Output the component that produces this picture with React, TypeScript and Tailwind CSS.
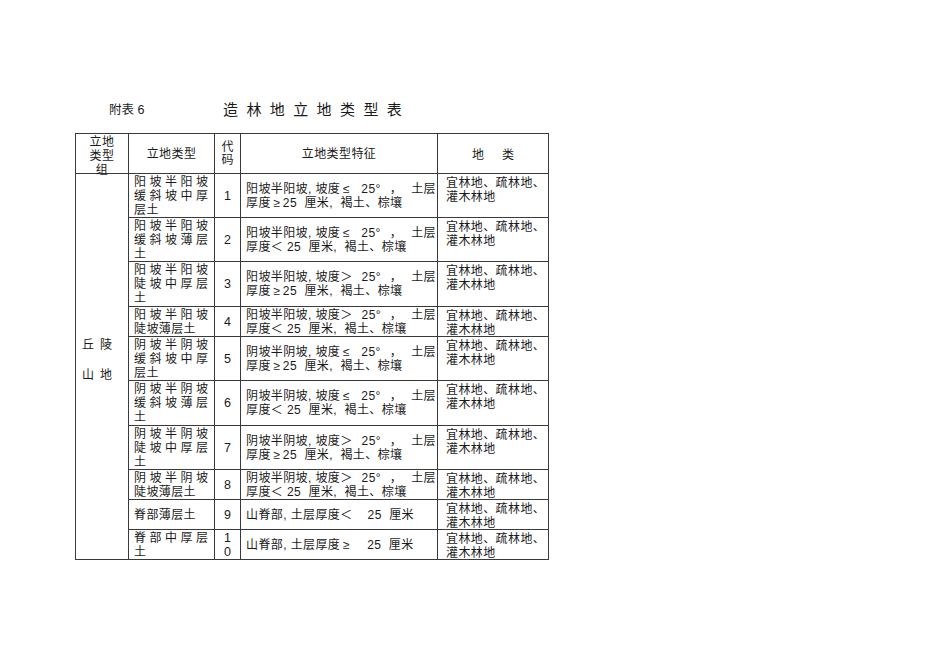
import React from "react";

const FONT = {
  fontFamily: '"Liberation Sans", "Noto Sans CJK SC", sans-serif',
};

type Row = {
  type: string[];
  code: string[];
  feat: string[][]; // each line: if more than one segment, justified
  land: string[];
};

const A = "宜林地、疏林地、";
const B = "灌木林地";

const L2a = "厚度≥25  厘米,  褐土、棕壤";
const L2b = "厚度＜ 25  厘米,  褐土、棕壤";

const rows: Row[] = [
  {
    type: ["阳坡半阳坡", "缓斜坡中厚", "层土"],
    code: ["1"],
    feat: [["阳坡半阳坡, 坡度≤", "25°", "，", "土层"], [L2a]],
    land: [A, B],
  },
  {
    type: ["阳坡半阳坡", "缓斜坡薄层", "土"],
    code: ["2"],
    feat: [["阳坡半阳坡, 坡度≤", "25°", "，", "土层"], [L2b]],
    land: [A, B],
  },
  {
    type: ["阳坡半阳坡", "陡坡中厚层", "土"],
    code: ["3"],
    feat: [["阳坡半阳坡, 坡度＞", "25°", "，", "土层"], [L2a]],
    land: [A, B],
  },
  {
    type: ["阳坡半阳坡", "陡坡薄层土"],
    code: ["4"],
    feat: [["阳坡半阳坡, 坡度＞", "25°", "，", "土层"], [L2b]],
    land: [A, B],
  },
  {
    type: ["阴坡半阴坡", "缓斜坡中厚", "层土"],
    code: ["5"],
    feat: [["阴坡半阴坡, 坡度≤", "25°", "，", "土层"], [L2a]],
    land: [A, B],
  },
  {
    type: ["阴坡半阴坡", "缓斜坡薄层", "土"],
    code: ["6"],
    feat: [["阴坡半阴坡, 坡度≤", "25°", "，", "土层"], [L2b]],
    land: [A, B],
  },
  {
    type: ["阴坡半阴坡", "陡坡中厚层", "土"],
    code: ["7"],
    feat: [["阴坡半阴坡, 坡度＞", "25°", "，", "土层"], [L2a]],
    land: [A, B],
  },
  {
    type: ["阴坡半阴坡", "陡坡薄层土"],
    code: ["8"],
    feat: [["阴坡半阴坡, 坡度＞", "25°", "，", "土层"], [L2b]],
    land: [A, B],
  },
  {
    type: ["脊部薄层土"],
    code: ["9"],
    feat: [["山脊部, 土层厚度＜    25  厘米"]],
    land: [A, B],
  },
  {
    type: ["脊部中厚层", "土"],
    code: ["1", "0"],
    feat: [["山脊部, 土层厚度≥    25  厘米"]],
    land: [A, B],
  },
];

function T({ s }: { s: string }) {
  const parts = s.split(/([≤≥])/);
  return (
    <>
      {parts.map((p, i) =>
        p === "≤" || p === "≥" ? (
          <span key={i} className="inline-block w-[12px] text-center tracking-normal">
            {p}
          </span>
        ) : (
          <React.Fragment key={i}>{p}</React.Fragment>
        )
      )}
    </>
  );
}

function TypeCell({ lines }: { lines: string[] }) {
  return (
    <div className="border-r border-b border-[#3a3a3a] overflow-hidden flex flex-col justify-center pl-[5px] pr-[6px]">
      {lines.map((l, i) =>
        i < lines.length - 1 ? (
          <div key={i} className="flex justify-between h-[14px] leading-[14px]">
            {l.split("").map((c, j) => (
              <span key={j}>{c}</span>
            ))}
          </div>
        ) : (
          <div key={i} className="h-[14px] leading-[14px] whitespace-nowrap tracking-[0.4px]">
            {l}
          </div>
        )
      )}
    </div>
  );
}

function FeatCell({ lines }: { lines: string[][] }) {
  return (
    <div className="border-r border-b border-[#3a3a3a] overflow-hidden flex flex-col justify-center pl-[5px] pr-[1px]">
      {lines.map((segs, i) =>
        segs.length > 1 ? (
          <div key={i} className="flex justify-between h-[14px] leading-[14px] whitespace-pre tracking-[0.4px]">
            {segs.map((s, j) => (
              <span key={j}>
                <T s={s} />
              </span>
            ))}
          </div>
        ) : (
          <div key={i} className="h-[14px] leading-[14px] whitespace-pre tracking-[0.4px]">
            <T s={segs[0]} />
          </div>
        )
      )}
    </div>
  );
}

export default function App() {
  const rowHeights = "grid-rows-[40px_44px_44px_45px_30px_44px_45px_44px_30px_30px_30px]";
  return (
    <div className="w-[950px] h-[672px] bg-white text-[#1a1a1a] text-[12px]" style={FONT}>
      <div className="pt-[101px] pl-[109px] flex items-center h-[119px]">
        <span className="w-[114px] text-[12.5px] leading-[18px]">附表 6</span>
        <span className="text-[15px] leading-[18px] tracking-[8.4px]">造林地立地类型表</span>
      </div>
      <div className="pt-[14px] pl-[75px]">
        <div
          className={`grid grid-cols-[53px_86px_26px_197px_111px] ${rowHeights} w-[474px] border-l border-t border-[#3a3a3a]`}
        >
          {/* header */}
          <div className="relative z-10 border-r border-b border-[#3a3a3a] flex flex-col items-center pt-[1px] leading-[14px] tracking-[0.4px]">
            <div>立地</div>
            <div>类型</div>
            <div>组</div>
          </div>
          <div className="border-r border-b border-[#3a3a3a] flex items-center justify-center tracking-[0.4px]">
            立地类型
          </div>
          <div className="border-r border-b border-[#3a3a3a] flex flex-col items-center justify-center leading-[13px]">
            <div>代</div>
            <div>码</div>
          </div>
          <div className="border-r border-b border-[#3a3a3a] flex items-center justify-center tracking-[0.4px]">
            立地类型特征
          </div>
          <div className="border-r border-b border-[#3a3a3a] flex items-center justify-center gap-[18px] pt-[2px]">
            <span>地</span>
            <span>类</span>
          </div>

          {/* group cell */}
          <div className="row-span-10 border-r border-b border-[#3a3a3a] flex flex-col justify-center gap-[16px] pl-[6px] pb-[14px] leading-[14px]">
            <div className="flex gap-[6px]">
              <span>丘</span>
              <span>陵</span>
            </div>
            <div className="flex gap-[6px]">
              <span>山</span>
              <span>地</span>
            </div>
          </div>

          {rows.map((r, i) => (
            <React.Fragment key={i}>
              <TypeCell lines={r.type} />
              <div className="border-r border-b border-[#3a3a3a] overflow-hidden flex flex-col items-center justify-center leading-[14px] text-[12.5px]">
                {r.code.map((c, j) => (
                  <div key={j}>{c}</div>
                ))}
              </div>
              <FeatCell lines={r.feat} />
              <div className="border-r border-b border-[#3a3a3a] overflow-hidden pl-[8px] pt-[2px] leading-[14px] tracking-[0.4px] whitespace-nowrap">
                {r.land.map((l, j) => (
                  <div key={j}>{l}</div>
                ))}
              </div>
            </React.Fragment>
          ))}
        </div>
      </div>
    </div>
  );
}
